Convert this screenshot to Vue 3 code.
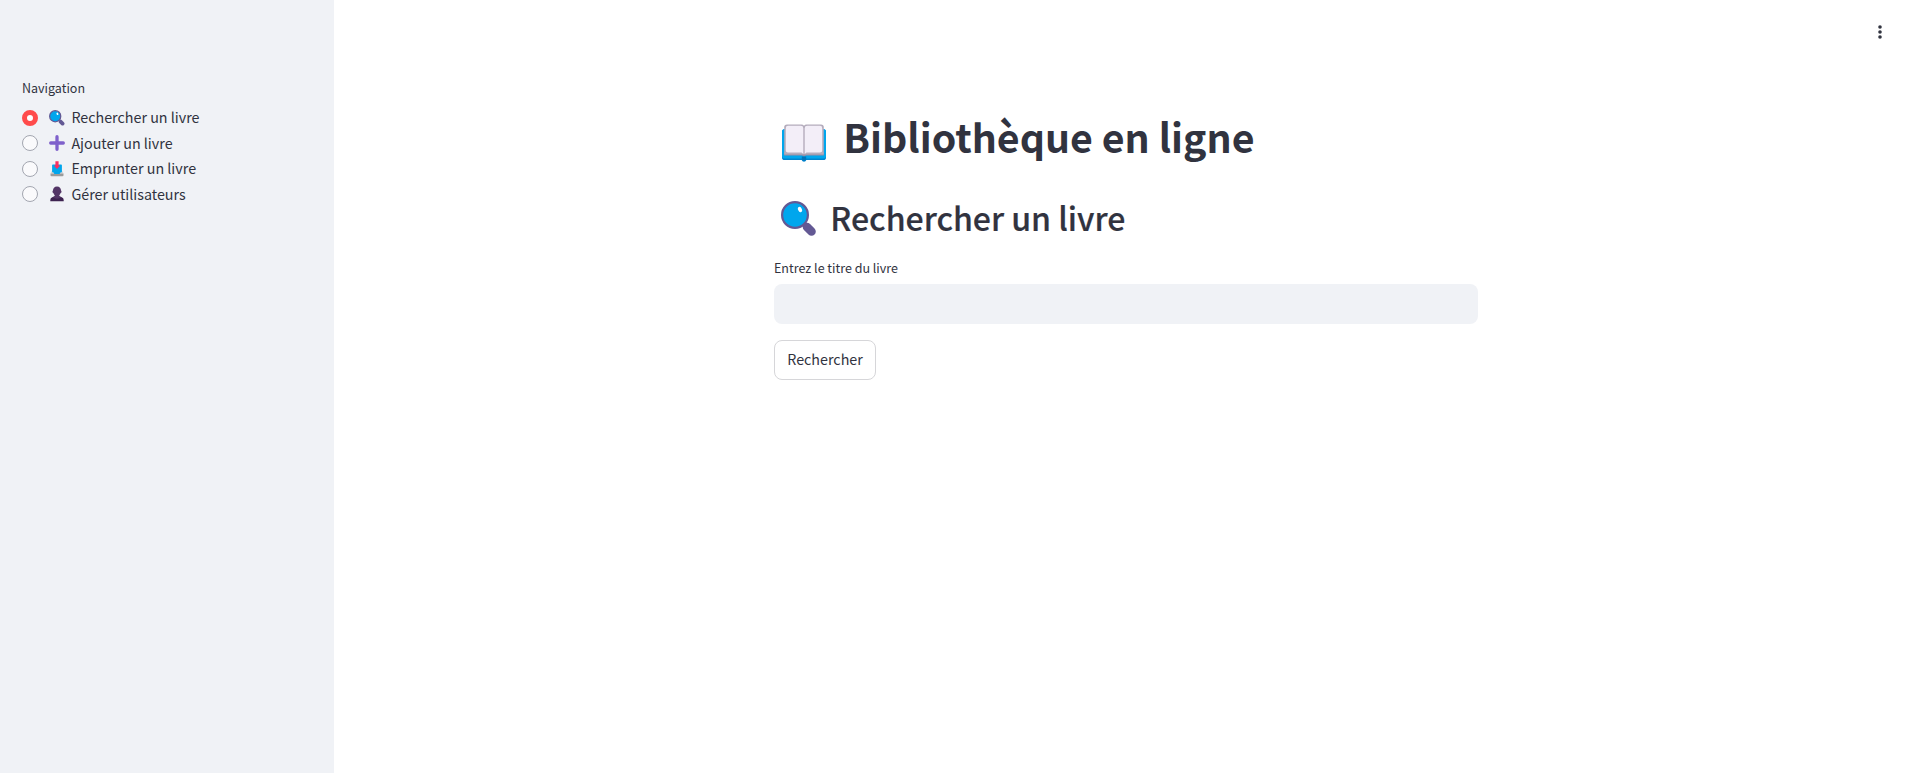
<script setup>
import { ref } from 'vue'

const options = [
  { id: 'search', label: 'Rechercher un livre' },
  { id: 'add', label: 'Ajouter un livre' },
  { id: 'borrow', label: 'Emprunter un livre' },
  { id: 'users', label: 'Gérer utilisateurs' },
]
const current = ref('search')
const query = ref('')
</script>

<template>
  <div class="app">
    <aside class="sidebar">
      <p class="nav-title">Navigation</p>
      <div class="options" role="radiogroup" aria-label="Navigation">
        <div
          v-for="o in options"
          :key="o.id"
          class="option"
          role="radio"
          :aria-checked="current === o.id"
          @click="current = o.id"
        >
          <span class="radio" :class="{ checked: current === o.id }"></span>
          <svg v-if="o.id === 'search'" class="emoji" viewBox="0 0 36 36">
            <path d="M26 26L30.5 30.5" stroke="#635994" stroke-width="8.6" stroke-linecap="round" />
            <circle cx="14" cy="14" r="12.5" fill="#00a6ed" stroke="#635994" stroke-width="2.8" />
            <ellipse cx="19" cy="8.5" rx="2" ry="2.8" transform="rotate(-25 19 8.5)" fill="#fff" />
          </svg>
          <svg v-else-if="o.id === 'add'" class="emoji" viewBox="0 0 16 16">
            <path d="M8 1.7V14.3M1.7 8H14.3" stroke="#7f61cb" stroke-width="3.3" stroke-linecap="round" />
          </svg>
          <svg v-else-if="o.id === 'borrow'" class="emoji" viewBox="0 0 16 16">
            <path d="M3.4 9L1.5 12.6H14.5L12.6 9Z" fill="#d3d3d3" />
            <path d="M1.5 12.4H14.5V14.2Q14.5 15.3 13.4 15.3H2.6Q1.5 15.3 1.5 14.2Z" fill="#9b9b9b" />
            <path d="M3.9 3.4H12.1Q12.9 3.4 12.9 4.3V11.2H11.7L10.6 12.9H5.4L4.3 11.2H3.1V4.3Q3.1 3.4 3.9 3.4Z" fill="#00a6ed" />
            <path d="M6.4 0.3H9.6V4.6H10.6Q11.2 4.6 10.8 5.1L8 7.9L5.2 5.1Q4.8 4.6 5.4 4.6H6.4Z" fill="#f92f60" />
          </svg>
          <svg v-else class="emoji" viewBox="0 0 16 16">
            <path d="M1.3 15.3V13.9Q1.3 11.9 3.3 11.3L6.2 10H9.8L12.7 11.3Q14.7 11.9 14.7 13.9V15.3Z" fill="#3d2350" />
            <path d="M8 0.5C5.4 0.5 4 2.2 4 4.6Q3.4 4.9 3.5 5.9Q3.7 6.9 4.4 7Q4.9 8.4 5.7 9.2V10.3L3.6 11.3Q8 14 12.4 11.3L10.3 10.3V9.2Q11.1 8.4 11.6 7Q12.3 6.9 12.5 5.9Q12.6 4.9 12 4.6C12 2.2 10.6 0.5 8 0.5Z" fill="#533566" />
          </svg>
          <span class="option-label">{{ o.label }}</span>
        </div>
      </div>
    </aside>

    <main class="main">
      <header class="toolbar">
        <svg class="menu" viewBox="0 0 20 20">
          <circle cx="10" cy="5" r="1.8" />
          <circle cx="10" cy="10" r="1.8" />
          <circle cx="10" cy="15" r="1.8" />
        </svg>
      </header>
      <section class="content">
        <h1 class="title">
          <svg class="book" viewBox="0 0 44 38">
            <path d="M0 8Q0 5.3 2.2 5.3H41.8Q44 5.3 44 8V33.4Q44 36.1 41.3 36.1H24.3Q23.8 37.8 22 37.8Q20.2 37.8 19.7 36.1H2.7Q0 36.1 0 33.4Z" fill="#0084ce" />
            <path d="M0 8Q0 5.3 2.2 5.3H41.8Q44 5.3 44 8V32Q44 34.5 41.3 34.5H2.7Q0 34.5 0 32Z" fill="#00a6ed" />
            <path d="M2.2 28H41.8V31.4H24L22 32.5L20 31.4H2.2Z" fill="#998ea4" />
            <path d="M2.2 3Q2.2 0.5 5 0.5H19.5Q21.2 0.5 22 1.7Q22.8 0.5 24.5 0.5H39Q41.8 0.5 41.8 3V30.5H2.2Z" fill="#b4acbc" />
            <path d="M3.8 4Q3.8 1.7 6 1.7H18.8Q21.3 1.7 21.3 4V30L19.5 28.6H6Q3.8 28.6 3.8 26.5ZM40.2 4Q40.2 1.7 38 1.7H25.2Q22.7 1.7 22.7 4V30L24.5 28.6H38Q40.2 28.6 40.2 26.5Z" fill="#f3eef8" />
            <path d="M19.8 32.4H24.2V35.8Q22 37.4 19.8 35.8Z" fill="#0074ba" />
          </svg>
          <span class="title-text">Bibliothèque en ligne</span>
        </h1>
        <h2 class="subtitle">
          <svg class="lens" viewBox="0 0 36 36">
            <path d="M26 26L30.5 30.5" stroke="#635994" stroke-width="8.6" stroke-linecap="round" />
            <path d="M20 20L26 26" stroke="#635994" stroke-width="4" />
            <circle cx="14" cy="14" r="12.9" fill="#00a6ed" stroke="#635994" stroke-width="2.2" />
            <ellipse cx="19" cy="8.5" rx="1.9" ry="2.8" transform="rotate(-25 19 8.5)" fill="#fff" />
          </svg>
          <span class="subtitle-text">Rechercher un livre</span>
        </h2>
        <label class="field-label" for="book-title">Entrez le titre du livre</label>
        <input id="book-title" v-model="query" class="field" type="text" />
        <button class="button" type="button">Rechercher</button>
      </section>
    </main>
  </div>
</template>

<style>
body {
  margin: 0;
  background: #fff;
}
</style>

<style scoped>
.app {
  display: flex;
  height: 773px;
  overflow: hidden;
  color: #31333f;
  font-family: "Source Sans Pro", "Noto Sans CJK SC", sans-serif;
  font-size: 14.3px;
}
.sidebar {
  box-sizing: border-box;
  flex: none;
  width: 334px;
  padding: 77px 22px 0;
  background: #f0f2f6;
}
.nav-title {
  margin: 0;
  font-size: 12.5px;
  line-height: 22px;
}
.options {
  margin-top: 6px;
}
.option {
  display: flex;
  align-items: center;
  height: 25.5px;
}
.radio {
  box-sizing: border-box;
  flex: none;
  width: 16px;
  height: 16px;
  border: 1px solid #a3a6b0;
  border-radius: 50%;
  background: #fafafc;
}
.radio.checked {
  border: 5px solid #ff4b4b;
  background: #fff;
}
.emoji {
  flex: none;
  width: 16px;
  height: 16px;
  margin: 0 6.4px 0 11px;
  fill: none;
}
.option-label {
  padding-bottom: 1px;
  line-height: 24px;
}
.main {
  flex: 1;
  min-width: 0;
}
.toolbar {
  display: flex;
  justify-content: flex-end;
  height: 60px;
  padding: 22px 26px 0 0;
  box-sizing: border-box;
}
.menu {
  width: 20px;
  height: 20px;
  fill: #31333f;
}
.content {
  display: flex;
  flex-direction: column;
  align-items: flex-start;
  width: 704px;
  margin: 0 0 0 440px;
  padding-top: 53px;
}
.title {
  display: flex;
  align-items: center;
  height: 53px;
  margin: 0;
  font-size: 39.3px;
  font-weight: 700;
  line-height: 53px;
}
.title-text {
  padding-bottom: 8px;
}
.book {
  flex: none;
  width: 44px;
  height: 38px;
  margin: 6px 17.3px 0 8px;
}
.subtitle {
  display: flex;
  align-items: center;
  height: 44px;
  margin: 30px 0 0;
  font-size: 32.1px;
  font-weight: 500;
  line-height: 44px;
}
.subtitle-text {
  padding-bottom: 2px;
  letter-spacing: -0.03px;
  -webkit-text-stroke: 0.2px #31333f;
}
.lens {
  flex: none;
  width: 36px;
  height: 36px;
  margin: 1px 13.3px 0 7px;
}
.field-label {
  margin-top: 17px;
  font-size: 12.5px;
  line-height: 22px;
}
.field {
  box-sizing: border-box;
  width: 704px;
  height: 40px;
  margin-top: 5px;
  padding: 0 12px;
  border: 0;
  border-radius: 8px;
  outline: none;
  background: #f0f2f6;
  color: inherit;
  font: inherit;
}
.button {
  box-sizing: border-box;
  width: 102px;
  height: 40px;
  margin-top: 16px;
  padding: 0 0 3px;
  border: 1px solid #d6d6d9;
  border-radius: 8px;
  background: #fff;
  color: inherit;
  font: inherit;
}
</style>
